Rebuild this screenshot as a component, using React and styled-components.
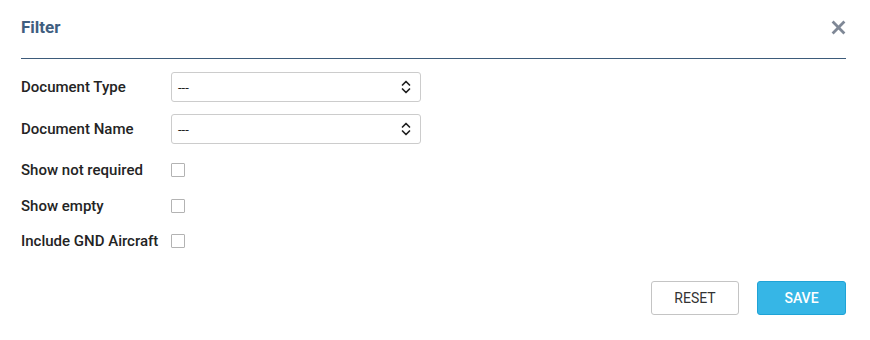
import React from 'react';
import styled, { createGlobalStyle } from 'styled-components';

const GlobalStyle = createGlobalStyle`
	body {
		margin: 0;
		background: #ffffff;
		font-family: Roboto, 'Liberation Sans', sans-serif;
	}
`;

const Dialog = styled.div`
	width: 870px;
	height: 340px;
	box-sizing: border-box;
	padding: 0 24px 0 21px;
	background: #fff;
`;

const Header = styled.div`
	display: flex;
	align-items: center;
	justify-content: space-between;
	height: 59px;
	box-sizing: border-box;
	padding-bottom: 4px;
	border-bottom: 1px solid #3d5b7a;
`;

const Title = styled.h2`
	margin: 0;
	font-size: 17px;
	font-weight: 700;
	color: #3f5e7f;
`;

const CloseButton = styled.button`
	display: flex;
	align-items: center;
	justify-content: center;
	width: 16px;
	height: 16px;
	padding: 0;
	border: none;
	background: none;
	cursor: pointer;
`;

const Form = styled.div`
	display: flex;
	flex-direction: column;
	padding-top: 13px;
`;

const Row = styled.div`
	display: flex;
	align-items: center;
	height: ${(p) => (p.$compact ? '22px' : '30px')};
	margin-bottom: ${(p) => p.$gap}px;
`;

const Label = styled.label`
	width: 150px;
	flex: none;
	font-size: 15px;
	font-weight: 500;
	color: #242424;
`;

const SelectBox = styled.div`
	display: flex;
	align-items: center;
	justify-content: space-between;
	width: 250px;
	height: 30px;
	box-sizing: border-box;
	padding: 0 9px 0 6px;
	border: 1px solid #cccccc;
	border-radius: 3px;
	font-size: 13px;
	color: #222;
`;

const Checkbox = styled.span`
	display: inline-block;
	width: 14px;
	height: 14px;
	box-sizing: border-box;
	border: 1.5px solid #b3b3b3;
	border-radius: 1px;
	background: #fff;
`;

const Footer = styled.div`
	display: flex;
	justify-content: flex-end;
	gap: 18px;
	margin-top: 29px;
`;

const Button = styled.button`
	width: ${(p) => p.$width}px;
	height: 34px;
	border-radius: 3px;
	font-family: Roboto, 'Liberation Sans', sans-serif;
	font-size: 14px;
	font-weight: ${(p) => (p.$primary ? 500 : 400)};
	color: ${(p) => (p.$primary ? '#ffffff' : '#333333')};
	background: ${(p) => (p.$primary ? '#36b6e6' : '#ffffff')};
	border: 1px solid ${(p) => (p.$primary ? '#1fa3d6' : '#c4c4c4')};
	cursor: pointer;
`;

function Chevrons() {
	return (
		<svg width="10" height="14" viewBox="0 0 10 14" fill="none" stroke="#222" strokeWidth="1.7" strokeLinecap="round" strokeLinejoin="round">
			<path d="M1.5 5 L5 1.5 L8.5 5" />
			<path d="M1.5 9 L5 12.5 L8.5 9" />
		</svg>
	);
}

function Select(props) {
	return (
		<SelectBox>
			<span>{props.value}</span>
			<Chevrons />
		</SelectBox>
	);
}

export default function App() {
	return (
		<>
			<GlobalStyle />
			<Dialog>
				<Header>
					<Title>Filter</Title>
					<CloseButton aria-label="close">
						<svg width="15" height="15" viewBox="0 0 14 14" stroke="#7f8896" strokeWidth="2.6" strokeLinecap="butt">
							<path d="M1.5 1.5 L12.5 12.5 M12.5 1.5 L1.5 12.5" />
						</svg>
					</CloseButton>
				</Header>
				<Form>
					<Row $gap={12}>
						<Label>Document Type</Label>
						<Select value="---" />
					</Row>
					<Row $gap={15}>
						<Label>Document Name</Label>
						<Select value="---" />
					</Row>
					<Row $compact $gap={13.5}>
						<Label>Show not required</Label>
						<Checkbox />
					</Row>
					<Row $compact $gap={13.5}>
						<Label>Show empty</Label>
						<Checkbox />
					</Row>
					<Row $compact $gap={0}>
						<Label>Include GND Aircraft</Label>
						<Checkbox />
					</Row>
				</Form>
				<Footer>
					<Button $width={88}>RESET</Button>
					<Button $primary $width={89}>SAVE</Button>
				</Footer>
			</Dialog>
		</>
	);
}
